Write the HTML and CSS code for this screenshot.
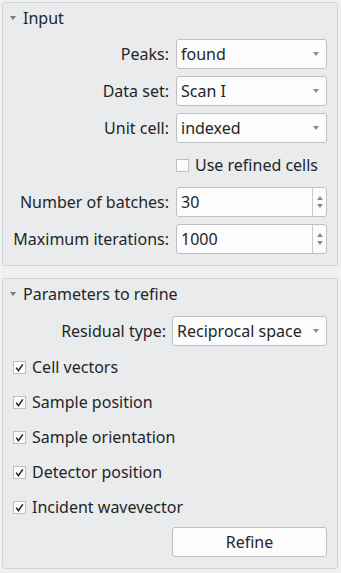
FILE: index.html
```html
<!DOCTYPE html>
<html lang="en">
<head>
    <meta charset="UTF-8">
    <meta name="viewport" content="width=device-width, initial-scale=1.0">
    <title>Refiner</title>
    <link rel="stylesheet" href="styles.css">
</head>
<body>
    <div class="panel">
        <section class="group">
            <div class="group-title"><span class="caret"></span>Input</div>
            <div class="form">
                <label class="lbl">Peaks:</label>
                <div class="combo">found<span class="arrow"></span></div>

                <label class="lbl">Data set:</label>
                <div class="combo">Scan I<span class="arrow"></span></div>

                <label class="lbl">Unit cell:</label>
                <div class="combo">indexed<span class="arrow"></span></div>

                <span></span>
                <div class="check"><span class="box"></span>Use refined cells</div>

                <label class="lbl">Number of batches:</label>
                <div class="spin">
                    <span class="value">30</span>
                    <span class="steps"><span class="up"></span><span class="down"></span></span>
                </div>

                <label class="lbl">Maximum iterations:</label>
                <div class="spin">
                    <span class="value">1000</span>
                    <span class="steps"><span class="up"></span><span class="down"></span></span>
                </div>
            </div>
        </section>

        <section class="group">
            <div class="group-title"><span class="caret"></span>Parameters to refine</div>
            <div class="form form-wide">
                <label class="lbl">Residual type:</label>
                <div class="combo">Reciprocal space<span class="arrow"></span></div>
            </div>
            <div class="checks">
                <div class="check"><span class="box checked"><svg viewBox="0 0 13 13" width="13" height="13"><path d="M3.2 6.6 L5.4 9.6 L9.8 3.4" fill="none" stroke="#232629" stroke-width="1.6"/></svg></span>Cell vectors</div>
                <div class="check"><span class="box checked"><svg viewBox="0 0 13 13" width="13" height="13"><path d="M3.2 6.6 L5.4 9.6 L9.8 3.4" fill="none" stroke="#232629" stroke-width="1.6"/></svg></span>Sample position</div>
                <div class="check"><span class="box checked"><svg viewBox="0 0 13 13" width="13" height="13"><path d="M3.2 6.6 L5.4 9.6 L9.8 3.4" fill="none" stroke="#232629" stroke-width="1.6"/></svg></span>Sample orientation</div>
                <div class="check"><span class="box checked"><svg viewBox="0 0 13 13" width="13" height="13"><path d="M3.2 6.6 L5.4 9.6 L9.8 3.4" fill="none" stroke="#232629" stroke-width="1.6"/></svg></span>Detector position</div>
                <div class="check"><span class="box checked"><svg viewBox="0 0 13 13" width="13" height="13"><path d="M3.2 6.6 L5.4 9.6 L9.8 3.4" fill="none" stroke="#232629" stroke-width="1.6"/></svg></span>Incident wavevector</div>
            </div>
            <div class="actions">
                <button class="btn">Refine</button>
            </div>
        </section>
    </div>
</body>
</html>
```

FILE: styles.css
```css
body {
    margin: 0;
    padding: 2px 3px 0 2px;
    background-color: #eff0f1;
    font-family: "Noto Sans", "DejaVu Sans", sans-serif;
    font-size: 16px;
    color: #232629;
}
.panel {
    display: flex;
    flex-direction: column;
    gap: 12px;
}
.group {
    background-color: #eaebec;
    border: 1px solid #d3d4d5;
    border-radius: 3px;
    padding: 0 10px 11px 10px;
}
.group-title {
    height: 30px;
    margin-left: -3px;
    display: flex;
    align-items: center;
    gap: 7px;
}
.caret {
    width: 0;
    height: 0;
    border-left: 3.5px solid transparent;
    border-right: 3.5px solid transparent;
    border-top: 4px solid #7b7c7e;
}
.form {
    margin-top: 6px;
    display: grid;
    grid-template-columns: 1fr 151px;
    column-gap: 7px;
    row-gap: 7px;
    align-items: center;
}
.form-wide {
    margin-top: 7px;
    grid-template-columns: 1fr 155px;
    column-gap: 6px;
}
.lbl {
    text-align: right;
    white-space: nowrap;
}
.combo, .spin {
    height: 28px;
    background-color: #fcfcfc;
    border: 1px solid #bdbfc1;
    border-radius: 3px;
    display: flex;
    align-items: center;
    position: relative;
}
.combo {
    padding-left: 4px;
}
.arrow {
    position: absolute;
    right: 7px;
    top: 12px;
    width: 0;
    height: 0;
    border-left: 3.5px solid transparent;
    border-right: 3.5px solid transparent;
    border-top: 4px solid #8a8c8e;
}
.spin .value {
    flex: 1;
    padding-left: 4px;
}
.steps {
    width: 13px;
    align-self: stretch;
    border-left: 1px solid #c9cacc;
    display: flex;
    flex-direction: column;
    justify-content: center;
    align-items: center;
    gap: 4px;
}
.up, .down {
    width: 0;
    height: 0;
    border-left: 3.5px solid transparent;
    border-right: 3.5px solid transparent;
}
.up {
    border-bottom: 4px solid #8a8c8e;
}
.down {
    border-top: 4px solid #8a8c8e;
}
.check {
    display: flex;
    align-items: center;
    gap: 6px;
    height: 30px;
}
.box {
    width: 11px;
    height: 11px;
    border: 1px solid #bdbfc1;
    background-color: #fcfcfc;
    position: relative;
    flex: none;
}
.box svg {
    position: absolute;
    left: -1px;
    top: -1px;
}
.checks {
    margin-top: 7px;
    display: flex;
    flex-direction: column;
    gap: 7px;
}
.checks .check {
    height: 28px;
}
.actions {
    margin-top: 6px;
    display: flex;
    justify-content: flex-end;
}
.btn {
    width: 155px;
    height: 30px;
    background-color: #fcfcfc;
    border: 1px solid #bdbfc1;
    border-radius: 3px;
    font-family: inherit;
    font-size: 16px;
    color: #232629;
}
```
